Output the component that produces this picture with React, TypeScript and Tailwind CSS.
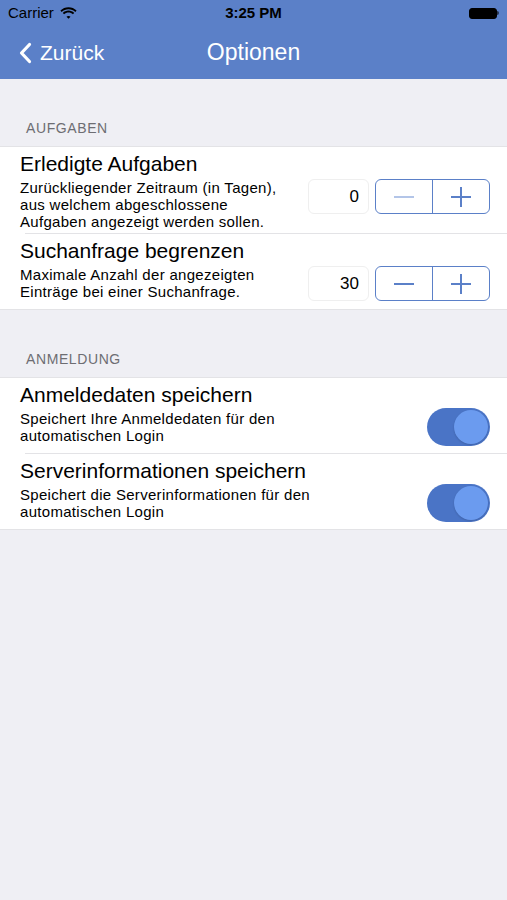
import React from "react";

const font = { fontFamily: '"Liberation Sans", Arial, sans-serif' };

function StatusBar() {
  return (
    <div className="relative flex h-[26px] items-center px-2 text-[15px] text-black">
      <div className="flex items-center gap-[6px]">
        <span>Carrier</span>
        <svg width="17" height="12" viewBox="0 0 17 12" fill="#000">
          <path d="M8.5 2.2c2.6 0 5 1 6.8 2.7l1.3-1.4C14.4 1.4 11.6.2 8.5.2S2.6 1.4.4 3.5l1.3 1.4C3.5 3.2 5.9 2.2 8.5 2.2z" />
          <path d="M8.5 5.6c1.7 0 3.2.6 4.4 1.7l1.3-1.4c-1.5-1.4-3.5-2.3-5.7-2.3S4.3 4.5 2.8 5.9l1.3 1.4c1.2-1.1 2.7-1.7 4.4-1.7z" />
          <path d="M8.5 8.9c.8 0 1.5.3 2 .8L8.5 11.8 6.5 9.7c.5-.5 1.2-.8 2-.8z" />
        </svg>
      </div>
      <span className="absolute left-1/2 -translate-x-1/2 font-bold">3:25 PM</span>
      <div className="ml-auto flex items-center">
        <div className="h-[11px] w-[28px] rounded-[3px] border border-black bg-black" />
        <div className="h-[4px] w-[2px] rounded-r-sm bg-black/60" />
      </div>
    </div>
  );
}

function NavBar() {
  return (
    <div className="relative flex h-[53px] items-center px-[19px] text-white">
      <div className="flex items-center gap-[8px]">
        <svg width="13" height="22" viewBox="0 0 13 22" fill="none" stroke="#fff" strokeWidth="3.2" strokeLinecap="round" strokeLinejoin="round">
          <path d="M10.5 2.5 2.5 11l8 8.5" />
        </svg>
        <span className="text-[21px]">Zurück</span>
      </div>
      <span className="absolute left-1/2 -translate-x-1/2 text-[23px] font-light">Optionen</span>
    </div>
  );
}

function SectionHeader({ children }: { children: React.ReactNode }) {
  return (
    <div className="flex items-end px-[26px] pb-[7px] text-[14px] tracking-[0.6px] text-[#6d6d72]">
      {children}
    </div>
  );
}

function Stepper({ value, minusDisabled }: { value: string; minusDisabled?: boolean }) {
  return (
    <div className="mt-[32px] flex items-start gap-[6px]">
      <div className="flex h-[35px] w-[61px] items-center justify-end rounded-[6px] border border-[#efefef] bg-white pr-[9px] text-[17px] text-black">
        {value}
      </div>
      <div className="flex h-[35px] w-[115px] overflow-hidden rounded-[6px] border border-[#5b80c8]">
        <div className="flex flex-1 items-center justify-center border-r border-[#5b80c8]">
          <div className={`h-[2px] w-[20px] ${minusDisabled ? "bg-[#b3c5e8]" : "bg-[#5b80c8]"}`} />
        </div>
        <div className="relative flex flex-1 items-center justify-center">
          <div className="h-[2px] w-[20px] bg-[#5b80c8]" />
          <div className="absolute h-[20px] w-[2px] bg-[#5b80c8]" />
        </div>
      </div>
    </div>
  );
}

function Toggle() {
  return (
    <div className="mt-[30px] flex h-[38px] w-[63px] items-center justify-end rounded-full bg-[#4a74c6] p-[2px]">
      <div className="h-[34px] w-[34px] rounded-full bg-[#6b9bef] shadow-[0_1px_2px_rgba(0,0,0,0.15)]" />
    </div>
  );
}

function Row({
  title,
  lines,
  height,
  right,
  last,
}: {
  title: string;
  lines: string[];
  height: string;
  right: React.ReactNode;
  last?: boolean;
}) {
  return (
    <div className={`relative flex ${height} pl-[20px] pr-[17px]`}>
      <div className="flex-1 pt-[5px]">
        <div className="text-[21px] leading-[24px] text-black">{title}</div>
        <div className="mt-[3px] text-[15px] leading-[17px] tracking-[0.3px] text-black">
          {lines.map((l) => (
            <div key={l} className="whitespace-nowrap">{l}</div>
          ))}
        </div>
      </div>
      <div className="flex items-start">{right}</div>
      {!last && <div className="absolute bottom-0 left-[25px] right-0 h-px bg-[#e3e3e6]" />}
    </div>
  );
}

export default function App() {
  return (
    <div className="min-h-[900px] w-[507px] bg-[#efeff4]" style={font}>
      <div className="bg-[#5b80c8]">
        <StatusBar />
        <NavBar />
      </div>

      <div className="flex h-[67px] flex-col justify-end">
        <SectionHeader>AUFGABEN</SectionHeader>
      </div>
      <div className="border-y border-[#e3e3e6] bg-white">
        <Row
          title="Erledigte Aufgaben"
          lines={["Zurückliegender Zeitraum (in Tagen),", "aus welchem abgeschlossene", "Aufgaben angezeigt werden sollen."]}
          height="h-[87px]"
          right={<Stepper value="0" minusDisabled />}
        />
        <Row
          title="Suchanfrage begrenzen"
          lines={["Maximale Anzahl der angezeigten", "Einträge bei einer Suchanfrage."]}
          height="h-[75px]"
          right={<Stepper value="30" />}
          last
        />
      </div>

      <div className="flex h-[67px] flex-col justify-end">
        <SectionHeader>ANMELDUNG</SectionHeader>
      </div>
      <div className="border-y border-[#e3e3e6] bg-white">
        <Row
          title="Anmeldedaten speichern"
          lines={["Speichert Ihre Anmeldedaten für den", "automatischen Login"]}
          height="h-[76px]"
          right={<Toggle />}
        />
        <Row
          title="Serverinformationen speichern"
          lines={["Speichert die Serverinformationen für den", "automatischen Login"]}
          height="h-[75px]"
          right={<Toggle />}
          last
        />
      </div>
    </div>
  );
}
